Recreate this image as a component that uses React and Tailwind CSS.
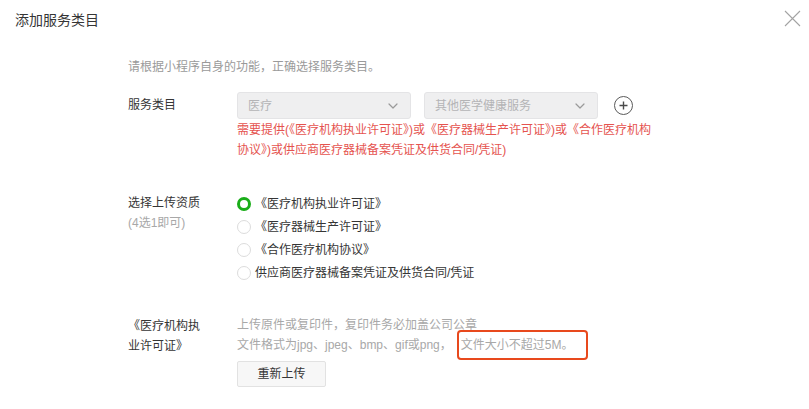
import React from "react";

function Chevron() {
  return (
    <svg width="10" height="6" viewBox="0 0 10 6" fill="none">
      <path d="M1 1l4 4 4-4" stroke="#9a9a9a" strokeWidth="1.2" strokeLinecap="round" strokeLinejoin="round" />
    </svg>
  );
}

function Select({ text }) {
  return (
    <div className="w-[174px] h-[27px] bg-[#efeff0] border border-[#e4e4e6] rounded-[3px] flex items-center justify-between pl-[10px] pr-[12px]">
      <span className="text-[12px] text-[#b4b4b6]">{text}</span>
      <Chevron />
    </div>
  );
}

function Radio({ checked, children }) {
  return (
    <div className="h-[23px] flex items-center">
      {checked ? (
        <span className="w-[14px] h-[14px] rounded-full border-[3px] border-[#1aad19] bg-white shrink-0" />
      ) : (
        <span className="w-[14px] h-[14px] rounded-full border border-[#dcdcdc] bg-white shrink-0" />
      )}
      <span className="ml-[4px] text-[12px] text-[#353535] whitespace-nowrap">{children}</span>
    </div>
  );
}

export default function App() {
  return (
    <div
      className="w-[809px] h-[409px] bg-white relative overflow-hidden"
      style={{ fontFamily: '"Liberation Sans", "Noto Sans CJK SC", sans-serif' }}
    >
      <div className="pl-[15px] pt-[10px] text-[14px] leading-[20px] text-[#353535]">添加服务类目</div>
      <button className="absolute right-[8px] top-[10px] w-[17px] h-[17px] flex items-center justify-center">
        <svg width="17" height="17" viewBox="0 0 17 17" fill="none">
          <path d="M1 1l15 15M16 1L1 16" stroke="#a3a3a3" strokeWidth="1.1" />
        </svg>
      </button>

      <div className="pl-[128px]">
        <div className="mt-[27px] text-[12px] leading-[20px] text-[#9a9a9a]">
          请根据小程序自身的功能，正确选择服务类目。
        </div>

        <div className="mt-[15px] flex">
          <div className="w-[109px] text-[12px] leading-[27px] text-[#353535]">服务类目</div>
          <div className="flex flex-col">
            <div className="flex items-center">
              <Select text="医疗" />
              <div className="ml-[13px]">
                <Select text="其他医学健康服务" />
              </div>
              <div className="ml-[16px] w-[19px] h-[19px] rounded-full border-[1.4px] border-[#5a5a5a] flex items-center justify-center">
                <svg width="9" height="9" viewBox="0 0 9 9" fill="none">
                  <path d="M4.5 0.5v8M0.5 4.5h8" stroke="#4a4a4a" strokeWidth="1.4" />
                </svg>
              </div>
            </div>
            <div className="mt-[1px] text-[12px] leading-[20px] text-[#e5534f] whitespace-nowrap">
              <div>需要提供(《医疗机构执业许可证》)或《医疗器械生产许可证》)或《合作医疗机构</div>
              <div>协议》)或供应商医疗器械备案凭证及供货合同/凭证)</div>
            </div>
          </div>
        </div>

        <div className="mt-[32px] flex">
          <div className="w-[109px] pt-[1px] text-[12px] leading-[20px]">
            <div className="text-[#353535]">选择上传资质</div>
            <div className="text-[#a8a8a8]">(4选1即可)</div>
          </div>
          <div className="flex flex-col">
            <Radio checked>《医疗机构执业许可证》</Radio>
            <Radio>《医疗器械生产许可证》</Radio>
            <Radio>《合作医疗机构协议》</Radio>
            <Radio>供应商医疗器械备案凭证及供货合同/凭证</Radio>
          </div>
        </div>

        <div className="mt-[31px] flex">
          <div className="w-[109px] pt-[1px] text-[12px] leading-[20px] text-[#353535]">
            <div>《医疗机构执</div>
            <div>业许可证》</div>
          </div>
          <div className="flex flex-col">
            <div className="text-[12px] leading-[20px] text-[#a8a8a8] whitespace-nowrap">
              <div>上传原件或复印件，复印件务必加盖公司公章</div>
              <div>
                文件格式为jpg、jpeg、bmp、gif或png，
                <span className="relative ml-[9px]">
                  文件大小不超过5M。
                  <span className="absolute left-[-4px] right-[-15px] top-[-8px] bottom-[-8px] border-2 border-[#e8491d] rounded-[4px]" />
                </span>
              </div>
            </div>
            <button className="mt-[6px] w-[89px] h-[26px] bg-[#f7f7f7] border border-[#e2e2e2] rounded-[2px] text-[12px] text-[#353535]">
              重新上传
            </button>
          </div>
        </div>
      </div>
    </div>
  );
}
